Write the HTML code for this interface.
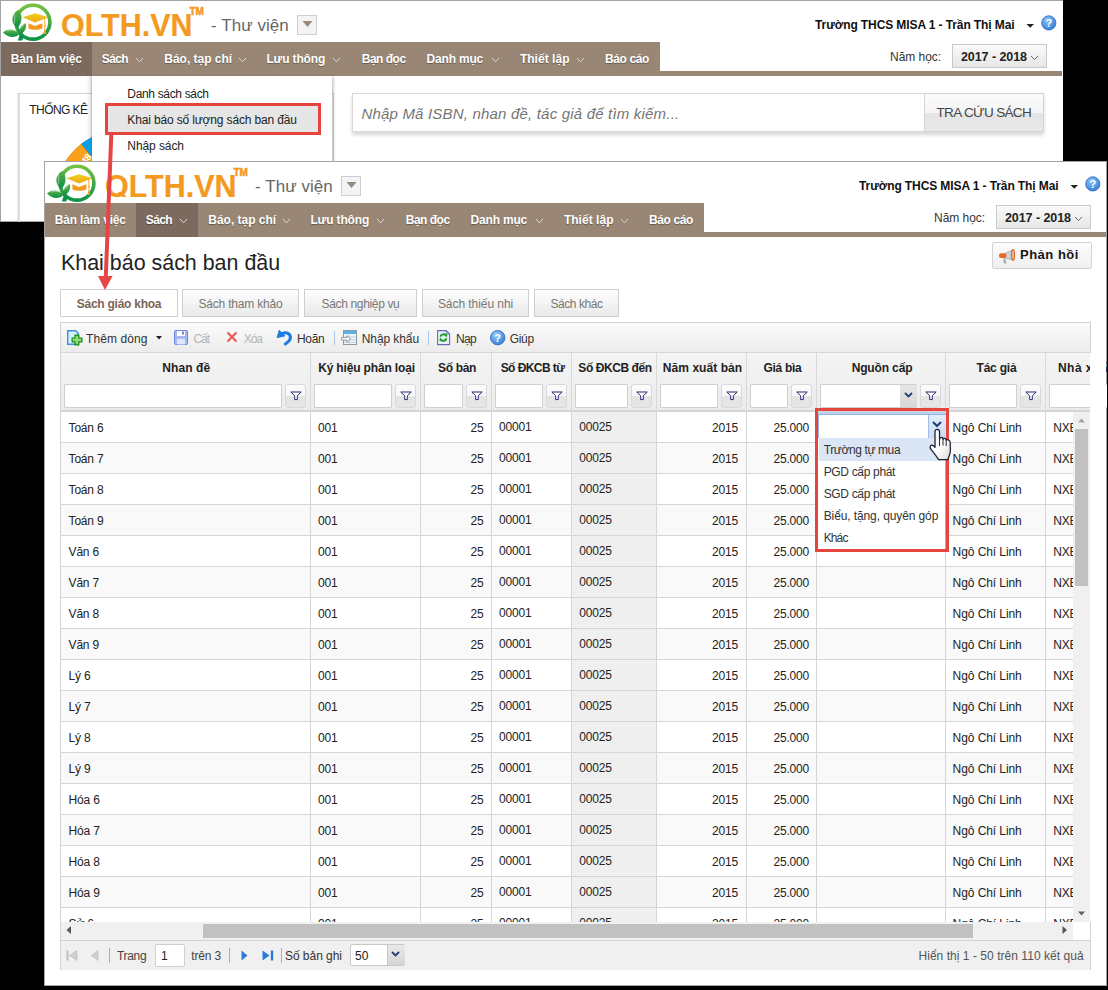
<!DOCTYPE html>
<html><head><meta charset="utf-8"><style>
html,body{margin:0;padding:0}
body{width:1108px;height:990px;background:#000;position:relative;overflow:hidden;font-family:"Liberation Sans", sans-serif}
.win{position:absolute;background:#fff;overflow:hidden}
</style></head><body>
<div class="win" style="left:0;top:0;width:1063px;height:222px"><svg style="position:absolute;left:0px;top:0px;overflow:visible" width="60" height="45" viewBox="0 0 60 45">
<defs>
<linearGradient id="rg" x1="0" y1="0" x2="0" y2="1"><stop offset="0" stop-color="#74c043"/><stop offset="1" stop-color="#0f9347"/></linearGradient>
<linearGradient id="lg" x1="0" y1="0" x2="0" y2="1"><stop offset="0" stop-color="#5cb246"/><stop offset="1" stop-color="#0b8f45"/></linearGradient>
<linearGradient id="cg" x1="0" y1="0" x2="0" y2="1"><stop offset="0" stop-color="#ecd21a"/><stop offset="1" stop-color="#f3a51c"/></linearGradient>
</defs>
<circle cx="33" cy="22.2" r="16.9" fill="none" stroke="url(#rg)" stroke-width="3.6"/>
<path d="M17.5 27.8 C10.5 24 10.5 14 18.6 9.8 C22.8 15 22.5 23 17.5 27.8 Z" fill="url(#lg)"/>
<path d="M20 33.8 C14 28 7 28.5 3 32.5 C8 38 15 38.5 20 33.8 Z" fill="url(#lg)"/>
<path d="M19 34.8 C18.8 28 21.5 24.5 26 23.2 C26.8 28.5 24.5 33 19 34.8 Z" fill="url(#lg)"/>
<path d="M17.8 40.6 L19.8 34.5 L23.8 36 L22.3 40.6 Z" fill="#0b9046"/>
<path d="M14.6 13.5 V23.5 M7 31.2 C10 30 13.5 30 15.8 31.2 M20.5 28.8 L24.3 24.6" stroke="#e9f6e4" stroke-width="0.55" fill="none" opacity="0.85"/>
<path d="M22.5 17.3 L35 13.2 L48.6 17.3 L35 22.5 Z" fill="url(#cg)"/>
<path d="M28.3 23.3 L35 26 L42.5 23.3 L42.3 28.5 C38 30.3 32 30.3 28.5 28.5 Z" fill="#f39a1d"/>
<path d="M44.6 17.5 L44.9 25" stroke="#f3a51c" stroke-width="0.9"/>
<circle cx="45" cy="26" r="1" fill="#f3a51c"/>
<path d="M44.9 26 L46.2 34 L43.6 34 Z" fill="#f39a1d"/>
</svg><div id="t0" style="position:absolute;top:24.5px;line-height:0;white-space:nowrap;font-size:30.5px;font-weight:bold;color:#f39a1f;transform-origin:0 0;transform:scaleX(0.9995);-webkit-text-stroke:0.2px #f39a1f;left:60.5px;">OLTH.VN</div><svg style="position:absolute;left:74px;top:30.5px;overflow:visible" width="9" height="6" viewBox="0 0 9 6"><path d="M0 0 L4 0 L8.5 5 L4.5 5 Z" fill="#f39a1f"/></svg><div id="t1" style="position:absolute;top:11.8px;line-height:0;white-space:nowrap;font-size:10px;font-weight:bold;color:#f39a1f;letter-spacing:-0.108px;-webkit-text-stroke:0.5px #f39a1f;left:189.5px;">TM</div><div id="t2" style="position:absolute;top:26px;line-height:0;white-space:nowrap;font-size:17px;font-weight:normal;color:#666;letter-spacing:0.060px;left:211px;">- Thư viện</div><div style="position:absolute;left:297px;top:15px;width:20px;height:19.5px;box-sizing:border-box;border:1px solid #cfcfcf;background:#f4f4f4"></div><svg style="position:absolute;left:301.5px;top:21px;overflow:visible" width="11" height="6" viewBox="0 0 11 6"><path d="M0.5 0 L10.5 0 L5.5 6 Z" fill="#9c8877"/></svg><div id="t3" style="position:absolute;top:25px;line-height:0;white-space:nowrap;font-size:12px;font-weight:bold;color:#111;letter-spacing:-0.100px;left:815px;">Trường THCS MISA 1 - Trần Thị Mai</div><svg style="position:absolute;left:1026px;top:23.5px;overflow:visible" width="9" height="5" viewBox="0 0 9 5"><path d="M0.5 0 L8 0 L4.25 3.8 Z" fill="#222"/></svg><svg style="position:absolute;left:1040.5px;top:14.5px;overflow:visible" width="16" height="16" viewBox="0 0 16 16"><defs><radialGradient id="hg" cx="0.4" cy="0.3" r="0.8"><stop offset="0" stop-color="#8fc3f5"/><stop offset="1" stop-color="#2c76d6"/></radialGradient></defs><circle cx="7.8" cy="7.9" r="7.1" fill="url(#hg)" stroke="#2d6fc4" stroke-width="0.9"/><text x="7.8" y="12" font-family="Liberation Sans" font-weight="bold" font-size="11" fill="#fff" text-anchor="middle">?</text></svg><div id="t4" style="position:absolute;top:56.8px;line-height:0;white-space:nowrap;font-size:12px;font-weight:normal;color:#333;letter-spacing:-0.031px;left:890px;">Năm học:</div><div style="position:absolute;left:952px;top:44px;width:95px;height:24px;box-sizing:border-box;border:1px solid #c8c8c8;background:linear-gradient(#fafafa,#e6e6e6)"></div><div id="t5" style="position:absolute;top:57px;line-height:0;white-space:nowrap;font-size:12.5px;font-weight:bold;color:#222;letter-spacing:-0.077px;left:961px;">2017 - 2018</div><svg style="position:absolute;left:1029.5px;top:54.5px" width="9" height="5.5"><path d="M1 1 L4.5 4.5 L8 1" fill="none" stroke="#666" stroke-width="1"/></svg><div style="position:absolute;left:1px;top:42px;width:659px;height:34px;background:#998675"></div><div style="position:absolute;left:1px;top:71px;width:1061px;height:5px;background:#998675"></div><div style="position:absolute;left:1px;top:42px;width:91px;height:34px;background:#7b6a5d"></div><div id="t6" style="position:absolute;top:58.8px;line-height:0;white-space:nowrap;font-size:12px;font-weight:bold;color:#fff;letter-spacing:-0.200px;text-shadow:0 1px 1px rgba(0,0,0,.35);left:10.8px;">Bàn làm việc</div><div id="t7" style="position:absolute;top:58.8px;line-height:0;white-space:nowrap;font-size:12px;font-weight:bold;color:#fff;letter-spacing:-0.651px;text-shadow:0 1px 1px rgba(0,0,0,.35);left:101.8px;">Sách</div><svg style="position:absolute;left:135.0px;top:56.5px" width="9" height="5.8"><path d="M1 1 L4.5 4.8 L8 1" fill="none" stroke="#e8e0d8" stroke-width="0.9"/></svg><div id="t8" style="position:absolute;top:58.8px;line-height:0;white-space:nowrap;font-size:12px;font-weight:bold;color:#fff;letter-spacing:-0.016px;text-shadow:0 1px 1px rgba(0,0,0,.35);left:164.3px;">Báo, tạp chí</div><svg style="position:absolute;left:238.0px;top:56.5px" width="9" height="5.8"><path d="M1 1 L4.5 4.8 L8 1" fill="none" stroke="#e8e0d8" stroke-width="0.9"/></svg><div id="t9" style="position:absolute;top:58.8px;line-height:0;white-space:nowrap;font-size:12px;font-weight:bold;color:#fff;letter-spacing:-0.134px;text-shadow:0 1px 1px rgba(0,0,0,.35);left:266.4px;">Lưu thông</div><svg style="position:absolute;left:331.5px;top:56.5px" width="9" height="5.8"><path d="M1 1 L4.5 4.8 L8 1" fill="none" stroke="#e8e0d8" stroke-width="0.9"/></svg><div id="t10" style="position:absolute;top:58.8px;line-height:0;white-space:nowrap;font-size:12px;font-weight:bold;color:#fff;letter-spacing:-0.511px;text-shadow:0 1px 1px rgba(0,0,0,.35);left:361.8px;">Bạn đọc</div><div id="t11" style="position:absolute;top:58.8px;line-height:0;white-space:nowrap;font-size:12px;font-weight:bold;color:#fff;letter-spacing:-0.191px;text-shadow:0 1px 1px rgba(0,0,0,.35);left:426.6px;">Danh mục</div><svg style="position:absolute;left:490.5px;top:56.5px" width="9" height="5.8"><path d="M1 1 L4.5 4.8 L8 1" fill="none" stroke="#e8e0d8" stroke-width="0.9"/></svg><div id="t12" style="position:absolute;top:58.8px;line-height:0;white-space:nowrap;font-size:12px;font-weight:bold;color:#fff;letter-spacing:0.037px;text-shadow:0 1px 1px rgba(0,0,0,.35);left:519.9px;">Thiết lập</div><svg style="position:absolute;left:575.5px;top:56.5px" width="9" height="5.8"><path d="M1 1 L4.5 4.8 L8 1" fill="none" stroke="#e8e0d8" stroke-width="0.9"/></svg><div id="t13" style="position:absolute;top:58.8px;line-height:0;white-space:nowrap;font-size:12px;font-weight:bold;color:#fff;letter-spacing:-0.392px;text-shadow:0 1px 1px rgba(0,0,0,.35);left:605px;">Báo cáo</div><div style="position:absolute;left:0px;top:0px;width:1063px;height:1px;background:#a3a3a3"></div><div style="position:absolute;left:0px;top:0px;width:1px;height:222px;background:#a3a3a3"></div><div style="position:absolute;left:0px;top:221px;width:1063px;height:1px;background:#a3a3a3"></div><div style="position:absolute;left:18px;top:93px;width:316px;height:207px;box-sizing:border-box;border:1px solid #d6d6d6;border-left:2px solid #dcdcdc;box-shadow:-1px 0 1px rgba(0,0,0,.08)"></div><div id="t14" style="position:absolute;top:109.8px;line-height:0;white-space:nowrap;font-size:12px;font-weight:normal;color:#222;letter-spacing:-0.567px;left:29.3px;">THỐNG KÊ</div><div style="position:absolute;left:86px;top:76px;width:6px;height:61px;background:linear-gradient(90deg,rgba(0,0,0,0),rgba(0,0,0,.06) 60%,rgba(0,0,0,.2))"></div><svg style="position:absolute;left:50px;top:125px;overflow:visible" width="150" height="150" viewBox="0 0 150 150"><path d="M75 75 L31.6 18.8 A71 71 0 0 0 4 75 Z" fill="#f9a11b" stroke="#c77c10" stroke-width="0.5"/><path d="M75 75 L31.6 18.8 A71 71 0 0 1 75 4 Z" fill="#08a0e6" stroke="#0a6fa6" stroke-width="0.5"/><text x="31" y="39" transform="rotate(-52 35 35)" font-family="Liberation Sans" font-weight="bold" font-size="10" fill="#fff">48</text></svg><div style="position:absolute;left:352px;top:93px;width:692px;height:39px;box-sizing:border-box;border:1px solid #d9d9d9;background:#fff;box-shadow:0 3px 4px rgba(0,0,0,.16)"></div><div id="t15" style="position:absolute;top:113.6px;line-height:0;white-space:nowrap;font-size:15px;font-weight:normal;color:#757575;letter-spacing:0.192px;font-style:italic;left:361.4px;">Nhập Mã ISBN, nhan đề, tác giả để tìm kiếm...</div><div style="position:absolute;left:924px;top:93px;width:120px;height:39px;box-sizing:border-box;border:1px solid #d3d3d3;background:linear-gradient(#fbfbfb 0,#f4f4f4 50%,#e4e4e4 51%,#e9e9e9 100%)"></div><div id="t16" style="position:absolute;top:113px;line-height:0;white-space:nowrap;font-size:13.5px;font-weight:normal;color:#444;letter-spacing:-0.644px;left:936.5px;">TRA CỨU SÁCH</div><div style="position:absolute;left:92px;top:76px;width:240px;height:224px;background:#fff;box-shadow:1px 1px 3px rgba(0,0,0,.3)"></div><div style="position:absolute;left:106px;top:104px;width:213px;height:29px;background:#e6e6e6"></div><div id="t17" style="position:absolute;top:93.7px;line-height:0;white-space:nowrap;font-size:12px;font-weight:normal;color:#222;letter-spacing:-0.337px;left:127.3px;">Danh sách sách</div><div id="t18" style="position:absolute;top:120px;line-height:0;white-space:nowrap;font-size:12px;font-weight:normal;color:#222;letter-spacing:-0.150px;left:127.3px;">Khai báo số lượng sách ban đầu</div><div id="t19" style="position:absolute;top:145.8px;line-height:0;white-space:nowrap;font-size:12px;font-weight:normal;color:#222;letter-spacing:-0.087px;left:127.3px;">Nhập sách</div><div style="position:absolute;left:105px;top:103px;width:216px;height:32px;box-sizing:border-box;border:3.5px solid #e5443f"></div></div><div class="win" style="left:44px;top:161px;width:1063px;height:825px"><svg style="position:absolute;left:0px;top:0px;overflow:visible" width="60" height="45" viewBox="0 0 60 45">
<defs>
<linearGradient id="rg" x1="0" y1="0" x2="0" y2="1"><stop offset="0" stop-color="#74c043"/><stop offset="1" stop-color="#0f9347"/></linearGradient>
<linearGradient id="lg" x1="0" y1="0" x2="0" y2="1"><stop offset="0" stop-color="#5cb246"/><stop offset="1" stop-color="#0b8f45"/></linearGradient>
<linearGradient id="cg" x1="0" y1="0" x2="0" y2="1"><stop offset="0" stop-color="#ecd21a"/><stop offset="1" stop-color="#f3a51c"/></linearGradient>
</defs>
<circle cx="33" cy="22.2" r="16.9" fill="none" stroke="url(#rg)" stroke-width="3.6"/>
<path d="M17.5 27.8 C10.5 24 10.5 14 18.6 9.8 C22.8 15 22.5 23 17.5 27.8 Z" fill="url(#lg)"/>
<path d="M20 33.8 C14 28 7 28.5 3 32.5 C8 38 15 38.5 20 33.8 Z" fill="url(#lg)"/>
<path d="M19 34.8 C18.8 28 21.5 24.5 26 23.2 C26.8 28.5 24.5 33 19 34.8 Z" fill="url(#lg)"/>
<path d="M17.8 40.6 L19.8 34.5 L23.8 36 L22.3 40.6 Z" fill="#0b9046"/>
<path d="M14.6 13.5 V23.5 M7 31.2 C10 30 13.5 30 15.8 31.2 M20.5 28.8 L24.3 24.6" stroke="#e9f6e4" stroke-width="0.55" fill="none" opacity="0.85"/>
<path d="M22.5 17.3 L35 13.2 L48.6 17.3 L35 22.5 Z" fill="url(#cg)"/>
<path d="M28.3 23.3 L35 26 L42.5 23.3 L42.3 28.5 C38 30.3 32 30.3 28.5 28.5 Z" fill="#f39a1d"/>
<path d="M44.6 17.5 L44.9 25" stroke="#f3a51c" stroke-width="0.9"/>
<circle cx="45" cy="26" r="1" fill="#f3a51c"/>
<path d="M44.9 26 L46.2 34 L43.6 34 Z" fill="#f39a1d"/>
</svg><div id="t20" style="position:absolute;top:24.5px;line-height:0;white-space:nowrap;font-size:30.5px;font-weight:bold;color:#f39a1f;transform-origin:0 0;transform:scaleX(0.9995);-webkit-text-stroke:0.2px #f39a1f;left:60.5px;">OLTH.VN</div><svg style="position:absolute;left:74px;top:30.5px;overflow:visible" width="9" height="6" viewBox="0 0 9 6"><path d="M0 0 L4 0 L8.5 5 L4.5 5 Z" fill="#f39a1f"/></svg><div id="t21" style="position:absolute;top:11.800000000000011px;line-height:0;white-space:nowrap;font-size:10px;font-weight:bold;color:#f39a1f;letter-spacing:-0.108px;-webkit-text-stroke:0.5px #f39a1f;left:189.5px;">TM</div><div id="t22" style="position:absolute;top:26px;line-height:0;white-space:nowrap;font-size:17px;font-weight:normal;color:#666;letter-spacing:0.060px;left:211px;">- Thư viện</div><div style="position:absolute;left:297px;top:15px;width:20px;height:19.5px;box-sizing:border-box;border:1px solid #cfcfcf;background:#f4f4f4"></div><svg style="position:absolute;left:301.5px;top:21px;overflow:visible" width="11" height="6" viewBox="0 0 11 6"><path d="M0.5 0 L10.5 0 L5.5 6 Z" fill="#9c8877"/></svg><div id="t23" style="position:absolute;top:25px;line-height:0;white-space:nowrap;font-size:12px;font-weight:bold;color:#111;letter-spacing:-0.100px;left:815px;">Trường THCS MISA 1 - Trần Thị Mai</div><svg style="position:absolute;left:1026px;top:23.5px;overflow:visible" width="9" height="5" viewBox="0 0 9 5"><path d="M0.5 0 L8 0 L4.25 3.8 Z" fill="#222"/></svg><svg style="position:absolute;left:1040.5px;top:14.5px;overflow:visible" width="16" height="16" viewBox="0 0 16 16"><defs><radialGradient id="hg" cx="0.4" cy="0.3" r="0.8"><stop offset="0" stop-color="#8fc3f5"/><stop offset="1" stop-color="#2c76d6"/></radialGradient></defs><circle cx="7.8" cy="7.9" r="7.1" fill="url(#hg)" stroke="#2d6fc4" stroke-width="0.9"/><text x="7.8" y="12" font-family="Liberation Sans" font-weight="bold" font-size="11" fill="#fff" text-anchor="middle">?</text></svg><div id="t24" style="position:absolute;top:56.80000000000001px;line-height:0;white-space:nowrap;font-size:12px;font-weight:normal;color:#333;letter-spacing:-0.031px;left:890px;">Năm học:</div><div style="position:absolute;left:952px;top:44px;width:95px;height:24px;box-sizing:border-box;border:1px solid #c8c8c8;background:linear-gradient(#fafafa,#e6e6e6)"></div><div id="t25" style="position:absolute;top:57px;line-height:0;white-space:nowrap;font-size:12.5px;font-weight:bold;color:#222;letter-spacing:-0.077px;left:961px;">2017 - 2018</div><svg style="position:absolute;left:1029.5px;top:54.5px" width="9" height="5.5"><path d="M1 1 L4.5 4.5 L8 1" fill="none" stroke="#666" stroke-width="1"/></svg><div style="position:absolute;left:1px;top:42px;width:659px;height:34px;background:#998675"></div><div style="position:absolute;left:1px;top:71px;width:1061px;height:5px;background:#998675"></div><div style="position:absolute;left:92px;top:42px;width:61.5px;height:34px;background:#7b6a5d"></div><div id="t26" style="position:absolute;top:58.80000000000001px;line-height:0;white-space:nowrap;font-size:12px;font-weight:bold;color:#fff;letter-spacing:-0.200px;text-shadow:0 1px 1px rgba(0,0,0,.35);left:10.799999999999997px;">Bàn làm việc</div><div id="t27" style="position:absolute;top:58.80000000000001px;line-height:0;white-space:nowrap;font-size:12px;font-weight:bold;color:#fff;letter-spacing:-0.651px;text-shadow:0 1px 1px rgba(0,0,0,.35);left:101.80000000000001px;">Sách</div><svg style="position:absolute;left:135.0px;top:56.5px" width="9" height="5.8"><path d="M1 1 L4.5 4.8 L8 1" fill="none" stroke="#e8e0d8" stroke-width="0.9"/></svg><div id="t28" style="position:absolute;top:58.80000000000001px;line-height:0;white-space:nowrap;font-size:12px;font-weight:bold;color:#fff;letter-spacing:-0.016px;text-shadow:0 1px 1px rgba(0,0,0,.35);left:164.3px;">Báo, tạp chí</div><svg style="position:absolute;left:238.0px;top:56.5px" width="9" height="5.8"><path d="M1 1 L4.5 4.8 L8 1" fill="none" stroke="#e8e0d8" stroke-width="0.9"/></svg><div id="t29" style="position:absolute;top:58.80000000000001px;line-height:0;white-space:nowrap;font-size:12px;font-weight:bold;color:#fff;letter-spacing:-0.134px;text-shadow:0 1px 1px rgba(0,0,0,.35);left:266.4px;">Lưu thông</div><svg style="position:absolute;left:331.5px;top:56.5px" width="9" height="5.8"><path d="M1 1 L4.5 4.8 L8 1" fill="none" stroke="#e8e0d8" stroke-width="0.9"/></svg><div id="t30" style="position:absolute;top:58.80000000000001px;line-height:0;white-space:nowrap;font-size:12px;font-weight:bold;color:#fff;letter-spacing:-0.511px;text-shadow:0 1px 1px rgba(0,0,0,.35);left:361.8px;">Bạn đọc</div><div id="t31" style="position:absolute;top:58.80000000000001px;line-height:0;white-space:nowrap;font-size:12px;font-weight:bold;color:#fff;letter-spacing:-0.191px;text-shadow:0 1px 1px rgba(0,0,0,.35);left:426.6px;">Danh mục</div><svg style="position:absolute;left:490.5px;top:56.5px" width="9" height="5.8"><path d="M1 1 L4.5 4.8 L8 1" fill="none" stroke="#e8e0d8" stroke-width="0.9"/></svg><div id="t32" style="position:absolute;top:58.80000000000001px;line-height:0;white-space:nowrap;font-size:12px;font-weight:bold;color:#fff;letter-spacing:0.037px;text-shadow:0 1px 1px rgba(0,0,0,.35);left:519.9px;">Thiết lập</div><svg style="position:absolute;left:575.5px;top:56.5px" width="9" height="5.8"><path d="M1 1 L4.5 4.8 L8 1" fill="none" stroke="#e8e0d8" stroke-width="0.9"/></svg><div id="t33" style="position:absolute;top:58.80000000000001px;line-height:0;white-space:nowrap;font-size:12px;font-weight:bold;color:#fff;letter-spacing:-0.392px;text-shadow:0 1px 1px rgba(0,0,0,.35);left:605px;">Báo cáo</div><div style="position:absolute;left:0px;top:0px;width:1063px;height:1px;background:#a3a3a3"></div><div style="position:absolute;left:0px;top:0px;width:1px;height:825px;background:#a3a3a3"></div><div style="position:absolute;left:1062px;top:0px;width:1px;height:825px;background:#a3a3a3"></div><div style="position:absolute;left:0px;top:824px;width:1063px;height:1px;background:#a3a3a3"></div><div id="t34" style="position:absolute;top:102px;line-height:0;white-space:nowrap;font-size:22.5px;font-weight:normal;color:#222;transform-origin:0 0;transform:scaleX(0.9520);left:17px;">Khai báo sách ban đầu</div><div style="position:absolute;left:948px;top:81px;width:100px;height:27px;box-sizing:border-box;border:1px solid #d4d4d4;border-radius:2px;background:linear-gradient(#fdfdfd,#efefef)"></div><svg style="position:absolute;left:954px;top:88px;overflow:visible" width="18" height="16" viewBox="0 0 18 16"><path d="M5 9.5 L7.5 9.5 L8.5 14.5 L5.8 14.5 Z" fill="#a9b3b3"/><path d="M7 4.5 L15 1 L15 11 L7 8.8 Z" fill="#cfd6d6" stroke="#8a9494" stroke-width="0.6"/><rect x="1" y="4.3" width="7.5" height="4.8" rx="2" fill="#e8692a"/><ellipse cx="15" cy="6" rx="1.4" ry="5.2" fill="#dfe5e5" stroke="#e8692a" stroke-width="1.5"/></svg><div id="t35" style="position:absolute;top:94px;line-height:0;white-space:nowrap;font-size:13px;font-weight:bold;color:#151515;letter-spacing:0.503px;left:976px;">Phản hồi</div><div style="position:absolute;left:16px;top:128px;width:118px;height:28px;box-sizing:border-box;border:1px solid #cfcfcf;background:#fff"></div><div id="t36" style="position:absolute;top:143px;line-height:0;white-space:nowrap;font-size:12px;font-weight:bold;color:#7b6454;letter-spacing:-0.258px;left:75.0px;transform:translateX(-50%);">Sách giáo khoa</div><div style="position:absolute;left:138px;top:128px;width:117px;height:28px;box-sizing:border-box;border:1px solid #cfcfcf;background:linear-gradient(#fefefe,#e9e9e9)"></div><div id="t37" style="position:absolute;top:143px;line-height:0;white-space:nowrap;font-size:12px;font-weight:normal;color:#777;letter-spacing:-0.196px;left:196.5px;transform:translateX(-50%);">Sách tham khảo</div><div style="position:absolute;left:260px;top:128px;width:113px;height:28px;box-sizing:border-box;border:1px solid #cfcfcf;background:linear-gradient(#fefefe,#e9e9e9)"></div><div id="t38" style="position:absolute;top:143px;line-height:0;white-space:nowrap;font-size:12px;font-weight:normal;color:#777;letter-spacing:-0.350px;left:316.5px;transform:translateX(-50%);">Sách nghiệp vụ</div><div style="position:absolute;left:378px;top:128px;width:107px;height:28px;box-sizing:border-box;border:1px solid #cfcfcf;background:linear-gradient(#fefefe,#e9e9e9)"></div><div id="t39" style="position:absolute;top:143px;line-height:0;white-space:nowrap;font-size:12px;font-weight:normal;color:#777;letter-spacing:-0.061px;left:431.5px;transform:translateX(-50%);">Sách thiếu nhi</div><div style="position:absolute;left:490px;top:128px;width:85px;height:28px;box-sizing:border-box;border:1px solid #cfcfcf;background:linear-gradient(#fefefe,#e9e9e9)"></div><div id="t40" style="position:absolute;top:143px;line-height:0;white-space:nowrap;font-size:12px;font-weight:normal;color:#777;letter-spacing:-0.467px;left:532.5px;transform:translateX(-50%);">Sách khác</div><div style="position:absolute;left:16px;top:161px;width:1031px;height:648px;box-sizing:border-box;border:1px solid #d3d3d3;border-bottom:none;background:#fff"></div><div style="position:absolute;left:17px;top:162px;width:1029px;height:29px;background:linear-gradient(#fbfbfb,#ececec)"></div><div style="position:absolute;left:17px;top:191px;width:1029px;height:1px;background:#d7d7d7"></div><svg style="position:absolute;left:22px;top:168px;overflow:visible" width="17" height="17" viewBox="0 0 17 17"><path d="M1.7 1.7 L9.6 1.7 L12.3 4.4 L12.3 15.2 L1.7 15.2 Z" fill="#d6efff" stroke="#3a93e2" stroke-width="1.4"/><path d="M3.5 3.5 H8 M3.5 13.5 H8" stroke="#f4fcff" stroke-width="1.2"/><path d="M9 6.1 H12.8 V9 H15.9 V12.8 H12.8 V15.8 H9 V12.8 H6.1 V9 H9 Z" fill="#8fdc7a" stroke="#128a12" stroke-width="1.2"/></svg><div id="t41" style="position:absolute;top:178px;line-height:0;white-space:nowrap;font-size:12px;font-weight:normal;color:#333;letter-spacing:0.084px;left:42px;">Thêm dòng</div><svg style="position:absolute;left:112px;top:175px;overflow:visible" width="6" height="4" viewBox="0 0 6 4"><path d="M0 0 L6 0 L3 3.5 Z" fill="#222"/></svg><svg style="position:absolute;left:130px;top:169px;overflow:visible" width="14" height="15" viewBox="0 0 14 15"><rect x="0.5" y="0.5" width="13" height="14" rx="1" fill="#a6b8f0" stroke="#6f86e0"/><rect x="3" y="1" width="8" height="5" fill="#fff"/><rect x="8" y="1.5" width="2" height="3" fill="#6f86e0"/><rect x="3" y="9" width="8" height="5.5" fill="#dfe6fb"/></svg><div id="t42" style="position:absolute;top:178px;line-height:0;white-space:nowrap;font-size:12px;font-weight:normal;color:#b5b5b5;letter-spacing:-0.970px;left:149.4px;">Cất</div><svg style="position:absolute;left:182px;top:170px;overflow:visible" width="12" height="12" viewBox="0 0 12 12"><path d="M1.5 1.5 L10.5 10.5 M10.5 1.5 L1.5 10.5" stroke="#e85b5b" stroke-width="2.2"/></svg><div id="t43" style="position:absolute;top:178px;line-height:0;white-space:nowrap;font-size:12px;font-weight:normal;color:#b5b5b5;letter-spacing:-1.089px;left:199.8px;">Xóa</div><svg style="position:absolute;left:232px;top:168px;overflow:visible" width="17" height="17" viewBox="0 0 17 17"><path d="M6.5 4.6 C10.5 2.6 14.4 4.8 14.4 8.6 C14.4 11 12.5 13 9.3 15" fill="none" stroke="#1d7ce0" stroke-width="3.1" stroke-linecap="round"/><path d="M3.2 1.1 L1 8.7 L8.9 7 Z" fill="#1d7ce0" stroke="#1d7ce0" stroke-width="0.8" stroke-linejoin="round"/></svg><div id="t44" style="position:absolute;top:178px;line-height:0;white-space:nowrap;font-size:12px;font-weight:normal;color:#333;letter-spacing:-0.338px;left:253px;">Hoãn</div><div style="position:absolute;left:290px;top:170px;width:1px;height:14px;background:#a9c8ea"></div><svg style="position:absolute;left:297px;top:169px;overflow:visible" width="17" height="16" viewBox="0 0 17 16"><rect x="2.5" y="0.5" width="13" height="14" fill="#eef6f9" stroke="#8d9ba1"/><rect x="3" y="1" width="12" height="3" fill="#5bb1ea"/><path d="M3 7 H15 M3 9.8 H15 M3 12.3 H15 M8 4 V14" stroke="#b9ccd4" stroke-width="0.9"/><path d="M0.5 7.6 H5.8 V5.8 L9.6 8.8 L5.8 11.8 V10 H0.5 Z" fill="#fff" stroke="#7a888e" stroke-width="0.8" stroke-linejoin="round"/></svg><div id="t45" style="position:absolute;top:178px;line-height:0;white-space:nowrap;font-size:12px;font-weight:normal;color:#333;letter-spacing:-0.096px;left:317.8px;">Nhập khẩu</div><div style="position:absolute;left:384px;top:170px;width:1px;height:14px;background:#a9c8ea"></div><svg style="position:absolute;left:393px;top:169px;overflow:visible" width="14" height="16" viewBox="0 0 14 16"><path d="M0.6 0.6 H9.2 L12.6 4 V14.6 H0.6 Z" fill="#e9eefc" stroke="#676db4" stroke-width="1.1"/><path d="M9.2 0.6 V4 H12.6" fill="none" stroke="#676db4" stroke-width="0.8"/><path d="M3.6 6.8 C3.8 4 8 3.6 8.8 5.6" fill="none" stroke="#15a015" stroke-width="1.9"/><path d="M7 4.2 L10.6 4.4 L9.4 7.6 Z" fill="#15a015"/><path d="M9.2 8.4 C9 11.2 4.8 11.6 4 9.6" fill="none" stroke="#15a015" stroke-width="1.9"/><path d="M5.8 11 L2.2 10.8 L3.4 7.6 Z" fill="#15a015"/></svg><div id="t46" style="position:absolute;top:178px;line-height:0;white-space:nowrap;font-size:12px;font-weight:normal;color:#333;letter-spacing:-0.670px;left:412px;">Nạp</div><svg style="position:absolute;left:445.5px;top:169px;overflow:visible" width="16" height="16" viewBox="0 0 16 16"><defs><radialGradient id="hg2" cx="0.4" cy="0.3" r="0.8"><stop offset="0" stop-color="#9dcbf6"/><stop offset="1" stop-color="#2c76d6"/></radialGradient></defs><circle cx="7.7" cy="7.7" r="7.2" fill="url(#hg2)" stroke="#2d6fc4" stroke-width="0.9"/><text x="7.7" y="12" font-family="Liberation Sans" font-weight="bold" font-size="11" fill="#fff" text-anchor="middle">?</text></svg><div id="t47" style="position:absolute;top:178px;line-height:0;white-space:nowrap;font-size:12px;font-weight:normal;color:#333;letter-spacing:-0.291px;left:465.7px;">Giúp</div><div style="position:absolute;left:17px;top:192px;width:1029px;height:57px;background:linear-gradient(#f4f4f4,#ececec)"></div><div style="position:absolute;left:17px;top:249px;width:1029px;height:2px;background:#d4d4d4"></div><div id="t48" style="position:absolute;top:207px;line-height:0;white-space:nowrap;font-size:12px;font-weight:bold;color:#222;letter-spacing:0.089px;left:142.25px;transform:translateX(-50%);">Nhan đề</div><div style="position:absolute;left:20px;top:223px;width:218px;height:24px;box-sizing:border-box;border:1px solid #cfcfcf;background:#fff;border-radius:1px"></div><div style="position:absolute;left:241px;top:223px;width:21px;height:24px;box-sizing:border-box;border:1px solid #d9d9d9;border-radius:3px;background:linear-gradient(#fcfcfc 0,#f8f8f8 48%,#e4e4e4 49%,#e6e6e6)"></div><svg style="position:absolute;left:246px;top:230px;overflow:visible" width="12" height="10" viewBox="0 0 12 10"><path d="M0.8 1 L11.2 1 L7.3 4.8 L7.3 8.6 L4.7 8.6 L4.7 4.8 Z" fill="#fff" stroke="#1c1c6a" stroke-width="0.95" stroke-linejoin="miter"/></svg><div style="position:absolute;left:266px;top:192px;width:1px;height:569px;background:#d9d9d9"></div><div id="t49" style="position:absolute;top:207px;line-height:0;white-space:nowrap;font-size:12px;font-weight:bold;color:#222;letter-spacing:-0.157px;left:322.5px;transform:translateX(-50%);">Ký hiệu phân loại</div><div style="position:absolute;left:270px;top:223px;width:78px;height:24px;box-sizing:border-box;border:1px solid #cfcfcf;background:#fff;border-radius:1px"></div><div style="position:absolute;left:351px;top:223px;width:21px;height:24px;box-sizing:border-box;border:1px solid #d9d9d9;border-radius:3px;background:linear-gradient(#fcfcfc 0,#f8f8f8 48%,#e4e4e4 49%,#e6e6e6)"></div><svg style="position:absolute;left:356px;top:230px;overflow:visible" width="12" height="10" viewBox="0 0 12 10"><path d="M0.8 1 L11.2 1 L7.3 4.8 L7.3 8.6 L4.7 8.6 L4.7 4.8 Z" fill="#fff" stroke="#1c1c6a" stroke-width="0.95" stroke-linejoin="miter"/></svg><div style="position:absolute;left:376px;top:192px;width:1px;height:569px;background:#d9d9d9"></div><div id="t50" style="position:absolute;top:207px;line-height:0;white-space:nowrap;font-size:12px;font-weight:bold;color:#222;letter-spacing:-0.334px;left:413.0px;transform:translateX(-50%);">Số bản</div><div style="position:absolute;left:380px;top:223px;width:39px;height:24px;box-sizing:border-box;border:1px solid #cfcfcf;background:#fff;border-radius:1px"></div><div style="position:absolute;left:422px;top:223px;width:21px;height:24px;box-sizing:border-box;border:1px solid #d9d9d9;border-radius:3px;background:linear-gradient(#fcfcfc 0,#f8f8f8 48%,#e4e4e4 49%,#e6e6e6)"></div><svg style="position:absolute;left:427px;top:230px;overflow:visible" width="12" height="10" viewBox="0 0 12 10"><path d="M0.8 1 L11.2 1 L7.3 4.8 L7.3 8.6 L4.7 8.6 L4.7 4.8 Z" fill="#fff" stroke="#1c1c6a" stroke-width="0.95" stroke-linejoin="miter"/></svg><div style="position:absolute;left:447px;top:192px;width:1px;height:569px;background:#d9d9d9"></div><div id="t51" style="position:absolute;top:207px;line-height:0;white-space:nowrap;font-size:12px;font-weight:bold;color:#222;letter-spacing:-0.574px;left:488.5px;transform:translateX(-50%);">Số ĐKCB từ</div><div style="position:absolute;left:451px;top:223px;width:48px;height:24px;box-sizing:border-box;border:1px solid #cfcfcf;background:#fff;border-radius:1px"></div><div style="position:absolute;left:502px;top:223px;width:21px;height:24px;box-sizing:border-box;border:1px solid #d9d9d9;border-radius:3px;background:linear-gradient(#fcfcfc 0,#f8f8f8 48%,#e4e4e4 49%,#e6e6e6)"></div><svg style="position:absolute;left:507px;top:230px;overflow:visible" width="12" height="10" viewBox="0 0 12 10"><path d="M0.8 1 L11.2 1 L7.3 4.8 L7.3 8.6 L4.7 8.6 L4.7 4.8 Z" fill="#fff" stroke="#1c1c6a" stroke-width="0.95" stroke-linejoin="miter"/></svg><div style="position:absolute;left:527px;top:192px;width:1px;height:569px;background:#d9d9d9"></div><div id="t52" style="position:absolute;top:207px;line-height:0;white-space:nowrap;font-size:12px;font-weight:bold;color:#222;letter-spacing:-0.417px;left:571.0px;transform:translateX(-50%);">Số ĐKCB đến</div><div style="position:absolute;left:531px;top:223px;width:53px;height:24px;box-sizing:border-box;border:1px solid #cfcfcf;background:#fff;border-radius:1px"></div><div style="position:absolute;left:587px;top:223px;width:21px;height:24px;box-sizing:border-box;border:1px solid #d9d9d9;border-radius:3px;background:linear-gradient(#fcfcfc 0,#f8f8f8 48%,#e4e4e4 49%,#e6e6e6)"></div><svg style="position:absolute;left:592px;top:230px;overflow:visible" width="12" height="10" viewBox="0 0 12 10"><path d="M0.8 1 L11.2 1 L7.3 4.8 L7.3 8.6 L4.7 8.6 L4.7 4.8 Z" fill="#fff" stroke="#1c1c6a" stroke-width="0.95" stroke-linejoin="miter"/></svg><div style="position:absolute;left:612px;top:192px;width:1px;height:569px;background:#d9d9d9"></div><div id="t53" style="position:absolute;top:207px;line-height:0;white-space:nowrap;font-size:12px;font-weight:bold;color:#222;letter-spacing:0.059px;left:658.5px;transform:translateX(-50%);">Năm xuất bản</div><div style="position:absolute;left:616px;top:223px;width:58px;height:24px;box-sizing:border-box;border:1px solid #cfcfcf;background:#fff;border-radius:1px"></div><div style="position:absolute;left:677px;top:223px;width:21px;height:24px;box-sizing:border-box;border:1px solid #d9d9d9;border-radius:3px;background:linear-gradient(#fcfcfc 0,#f8f8f8 48%,#e4e4e4 49%,#e6e6e6)"></div><svg style="position:absolute;left:682px;top:230px;overflow:visible" width="12" height="10" viewBox="0 0 12 10"><path d="M0.8 1 L11.2 1 L7.3 4.8 L7.3 8.6 L4.7 8.6 L4.7 4.8 Z" fill="#fff" stroke="#1c1c6a" stroke-width="0.95" stroke-linejoin="miter"/></svg><div style="position:absolute;left:702px;top:192px;width:1px;height:569px;background:#d9d9d9"></div><div id="t54" style="position:absolute;top:207px;line-height:0;white-space:nowrap;font-size:12px;font-weight:bold;color:#222;letter-spacing:-0.307px;left:738.5px;transform:translateX(-50%);">Giá bìa</div><div style="position:absolute;left:706px;top:223px;width:38px;height:24px;box-sizing:border-box;border:1px solid #cfcfcf;background:#fff;border-radius:1px"></div><div style="position:absolute;left:747px;top:223px;width:21px;height:24px;box-sizing:border-box;border:1px solid #d9d9d9;border-radius:3px;background:linear-gradient(#fcfcfc 0,#f8f8f8 48%,#e4e4e4 49%,#e6e6e6)"></div><svg style="position:absolute;left:752px;top:230px;overflow:visible" width="12" height="10" viewBox="0 0 12 10"><path d="M0.8 1 L11.2 1 L7.3 4.8 L7.3 8.6 L4.7 8.6 L4.7 4.8 Z" fill="#fff" stroke="#1c1c6a" stroke-width="0.95" stroke-linejoin="miter"/></svg><div style="position:absolute;left:772px;top:192px;width:1px;height:569px;background:#d9d9d9"></div><div id="t55" style="position:absolute;top:207px;line-height:0;white-space:nowrap;font-size:12px;font-weight:bold;color:#222;letter-spacing:-0.146px;left:838.0px;transform:translateX(-50%);">Nguồn cấp</div><div style="position:absolute;left:776px;top:223px;width:97px;height:24px;box-sizing:border-box;border:1px solid #cfcfcf;background:#fff;border-radius:1px"></div><div style="position:absolute;left:856px;top:224px;width:17px;height:22px;background:linear-gradient(#e6e6e6,#d8d8d8)"></div><svg style="position:absolute;left:860px;top:231px;overflow:visible" width="9" height="6" viewBox="0 0 9 6"><path d="M1 1 L4.5 4.5 L8 1" fill="none" stroke="#1f3f7a" stroke-width="1.8"/></svg><div style="position:absolute;left:876px;top:223px;width:21px;height:24px;box-sizing:border-box;border:1px solid #d9d9d9;border-radius:3px;background:linear-gradient(#fcfcfc 0,#f8f8f8 48%,#e4e4e4 49%,#e6e6e6)"></div><svg style="position:absolute;left:881px;top:230px;overflow:visible" width="12" height="10" viewBox="0 0 12 10"><path d="M0.8 1 L11.2 1 L7.3 4.8 L7.3 8.6 L4.7 8.6 L4.7 4.8 Z" fill="#fff" stroke="#1c1c6a" stroke-width="0.95" stroke-linejoin="miter"/></svg><div style="position:absolute;left:901px;top:192px;width:1px;height:569px;background:#d9d9d9"></div><div id="t56" style="position:absolute;top:207px;line-height:0;white-space:nowrap;font-size:12px;font-weight:bold;color:#222;letter-spacing:-0.196px;left:952.5px;transform:translateX(-50%);">Tác giả</div><div style="position:absolute;left:905px;top:223px;width:68px;height:24px;box-sizing:border-box;border:1px solid #cfcfcf;background:#fff;border-radius:1px"></div><div style="position:absolute;left:976px;top:223px;width:21px;height:24px;box-sizing:border-box;border:1px solid #d9d9d9;border-radius:3px;background:linear-gradient(#fcfcfc 0,#f8f8f8 48%,#e4e4e4 49%,#e6e6e6)"></div><svg style="position:absolute;left:981px;top:230px;overflow:visible" width="12" height="10" viewBox="0 0 12 10"><path d="M0.8 1 L11.2 1 L7.3 4.8 L7.3 8.6 L4.7 8.6 L4.7 4.8 Z" fill="#fff" stroke="#1c1c6a" stroke-width="0.95" stroke-linejoin="miter"/></svg><div style="position:absolute;left:1001px;top:192px;width:1px;height:569px;background:#d9d9d9"></div><div id="t57" style="position:absolute;top:207px;line-height:0;white-space:nowrap;font-size:12px;font-weight:bold;color:#222;letter-spacing:0.453px;left:1014px;">Nhà xuất bản</div><div style="position:absolute;left:1005px;top:223px;width:70px;height:24px;box-sizing:border-box;border:1px solid #cfcfcf;background:#fff;border-radius:1px"></div><div style="position:absolute;left:1078px;top:223px;width:21px;height:24px;box-sizing:border-box;border:1px solid #d9d9d9;border-radius:3px;background:linear-gradient(#fcfcfc 0,#f8f8f8 48%,#e4e4e4 49%,#e6e6e6)"></div><svg style="position:absolute;left:1083px;top:230px;overflow:visible" width="12" height="10" viewBox="0 0 12 10"><path d="M0.8 1 L11.2 1 L7.3 4.8 L7.3 8.6 L4.7 8.6 L4.7 4.8 Z" fill="#fff" stroke="#1c1c6a" stroke-width="0.95" stroke-linejoin="miter"/></svg><div style="position:absolute;left:1046px;top:192px;width:16px;height:569px;background:#fff"></div><div style="position:absolute;left:17px;top:251px;width:1012px;height:30px;background:#fff"></div><div style="position:absolute;left:528px;top:251px;width:84px;height:30px;background:#efefef"></div><div style="position:absolute;left:17px;top:281px;width:1012px;height:1px;background:#d6d6d6"></div><div id="t58" style="position:absolute;top:267px;line-height:0;white-space:nowrap;font-size:12px;font-weight:normal;color:#222;letter-spacing:0.000px;letter-spacing:-0.2px;left:24.599999999999994px;">Toán 6</div><div id="t59" style="position:absolute;top:267px;line-height:0;white-space:nowrap;font-size:12px;font-weight:normal;color:#222;letter-spacing:0.000px;letter-spacing:-0.2px;left:274px;">001</div><div id="t60" style="position:absolute;top:267px;line-height:0;white-space:nowrap;font-size:12px;font-weight:normal;color:#222;letter-spacing:0.000px;letter-spacing:-0.2px;right:623.5px;">25</div><div id="t61" style="position:absolute;top:266px;line-height:0;white-space:nowrap;font-size:12px;font-weight:normal;color:#222;letter-spacing:0.000px;letter-spacing:-0.2px;left:455px;">00001</div><div id="t62" style="position:absolute;top:266px;line-height:0;white-space:nowrap;font-size:12px;font-weight:normal;color:#222;letter-spacing:0.000px;letter-spacing:-0.2px;left:535.3px;">00025</div><div id="t63" style="position:absolute;top:267px;line-height:0;white-space:nowrap;font-size:12px;font-weight:normal;color:#222;letter-spacing:0.000px;letter-spacing:-0.2px;right:369px;">2015</div><div id="t64" style="position:absolute;top:267px;line-height:0;white-space:nowrap;font-size:12px;font-weight:normal;color:#222;letter-spacing:0.000px;letter-spacing:-0.2px;right:298px;">25.000</div><div id="t65" style="position:absolute;top:267px;line-height:0;white-space:nowrap;font-size:12px;font-weight:normal;color:#222;letter-spacing:-0.079px;left:908.6px;">Ngô Chí Linh</div><div id="t66" style="position:absolute;top:267px;line-height:0;white-space:nowrap;font-size:12px;font-weight:normal;color:#222;letter-spacing:0.000px;letter-spacing:-0.2px;left:1009.3px;">NXB</div><div style="position:absolute;left:17px;top:282px;width:1012px;height:30px;background:#f9f9f9"></div><div style="position:absolute;left:528px;top:282px;width:84px;height:30px;background:#efefef"></div><div style="position:absolute;left:17px;top:312px;width:1012px;height:1px;background:#d6d6d6"></div><div id="t67" style="position:absolute;top:298px;line-height:0;white-space:nowrap;font-size:12px;font-weight:normal;color:#222;letter-spacing:0.000px;letter-spacing:-0.2px;left:24.599999999999994px;">Toán 7</div><div id="t68" style="position:absolute;top:298px;line-height:0;white-space:nowrap;font-size:12px;font-weight:normal;color:#222;letter-spacing:0.000px;letter-spacing:-0.2px;left:274px;">001</div><div id="t69" style="position:absolute;top:298px;line-height:0;white-space:nowrap;font-size:12px;font-weight:normal;color:#222;letter-spacing:0.000px;letter-spacing:-0.2px;right:623.5px;">25</div><div id="t70" style="position:absolute;top:297px;line-height:0;white-space:nowrap;font-size:12px;font-weight:normal;color:#222;letter-spacing:0.000px;letter-spacing:-0.2px;left:455px;">00001</div><div id="t71" style="position:absolute;top:297px;line-height:0;white-space:nowrap;font-size:12px;font-weight:normal;color:#222;letter-spacing:0.000px;letter-spacing:-0.2px;left:535.3px;">00025</div><div id="t72" style="position:absolute;top:298px;line-height:0;white-space:nowrap;font-size:12px;font-weight:normal;color:#222;letter-spacing:0.000px;letter-spacing:-0.2px;right:369px;">2015</div><div id="t73" style="position:absolute;top:298px;line-height:0;white-space:nowrap;font-size:12px;font-weight:normal;color:#222;letter-spacing:0.000px;letter-spacing:-0.2px;right:298px;">25.000</div><div id="t74" style="position:absolute;top:298px;line-height:0;white-space:nowrap;font-size:12px;font-weight:normal;color:#222;letter-spacing:-0.079px;left:908.6px;">Ngô Chí Linh</div><div id="t75" style="position:absolute;top:298px;line-height:0;white-space:nowrap;font-size:12px;font-weight:normal;color:#222;letter-spacing:0.000px;letter-spacing:-0.2px;left:1009.3px;">NXB</div><div style="position:absolute;left:17px;top:313px;width:1012px;height:30px;background:#fff"></div><div style="position:absolute;left:528px;top:313px;width:84px;height:30px;background:#efefef"></div><div style="position:absolute;left:17px;top:343px;width:1012px;height:1px;background:#d6d6d6"></div><div id="t76" style="position:absolute;top:329px;line-height:0;white-space:nowrap;font-size:12px;font-weight:normal;color:#222;letter-spacing:0.000px;letter-spacing:-0.2px;left:24.599999999999994px;">Toán 8</div><div id="t77" style="position:absolute;top:329px;line-height:0;white-space:nowrap;font-size:12px;font-weight:normal;color:#222;letter-spacing:0.000px;letter-spacing:-0.2px;left:274px;">001</div><div id="t78" style="position:absolute;top:329px;line-height:0;white-space:nowrap;font-size:12px;font-weight:normal;color:#222;letter-spacing:0.000px;letter-spacing:-0.2px;right:623.5px;">25</div><div id="t79" style="position:absolute;top:328px;line-height:0;white-space:nowrap;font-size:12px;font-weight:normal;color:#222;letter-spacing:0.000px;letter-spacing:-0.2px;left:455px;">00001</div><div id="t80" style="position:absolute;top:328px;line-height:0;white-space:nowrap;font-size:12px;font-weight:normal;color:#222;letter-spacing:0.000px;letter-spacing:-0.2px;left:535.3px;">00025</div><div id="t81" style="position:absolute;top:329px;line-height:0;white-space:nowrap;font-size:12px;font-weight:normal;color:#222;letter-spacing:0.000px;letter-spacing:-0.2px;right:369px;">2015</div><div id="t82" style="position:absolute;top:329px;line-height:0;white-space:nowrap;font-size:12px;font-weight:normal;color:#222;letter-spacing:0.000px;letter-spacing:-0.2px;right:298px;">25.000</div><div id="t83" style="position:absolute;top:329px;line-height:0;white-space:nowrap;font-size:12px;font-weight:normal;color:#222;letter-spacing:-0.079px;left:908.6px;">Ngô Chí Linh</div><div id="t84" style="position:absolute;top:329px;line-height:0;white-space:nowrap;font-size:12px;font-weight:normal;color:#222;letter-spacing:0.000px;letter-spacing:-0.2px;left:1009.3px;">NXB</div><div style="position:absolute;left:17px;top:344px;width:1012px;height:30px;background:#f9f9f9"></div><div style="position:absolute;left:528px;top:344px;width:84px;height:30px;background:#efefef"></div><div style="position:absolute;left:17px;top:374px;width:1012px;height:1px;background:#d6d6d6"></div><div id="t85" style="position:absolute;top:360px;line-height:0;white-space:nowrap;font-size:12px;font-weight:normal;color:#222;letter-spacing:0.000px;letter-spacing:-0.2px;left:24.599999999999994px;">Toán 9</div><div id="t86" style="position:absolute;top:360px;line-height:0;white-space:nowrap;font-size:12px;font-weight:normal;color:#222;letter-spacing:0.000px;letter-spacing:-0.2px;left:274px;">001</div><div id="t87" style="position:absolute;top:360px;line-height:0;white-space:nowrap;font-size:12px;font-weight:normal;color:#222;letter-spacing:0.000px;letter-spacing:-0.2px;right:623.5px;">25</div><div id="t88" style="position:absolute;top:359px;line-height:0;white-space:nowrap;font-size:12px;font-weight:normal;color:#222;letter-spacing:0.000px;letter-spacing:-0.2px;left:455px;">00001</div><div id="t89" style="position:absolute;top:359px;line-height:0;white-space:nowrap;font-size:12px;font-weight:normal;color:#222;letter-spacing:0.000px;letter-spacing:-0.2px;left:535.3px;">00025</div><div id="t90" style="position:absolute;top:360px;line-height:0;white-space:nowrap;font-size:12px;font-weight:normal;color:#222;letter-spacing:0.000px;letter-spacing:-0.2px;right:369px;">2015</div><div id="t91" style="position:absolute;top:360px;line-height:0;white-space:nowrap;font-size:12px;font-weight:normal;color:#222;letter-spacing:0.000px;letter-spacing:-0.2px;right:298px;">25.000</div><div id="t92" style="position:absolute;top:360px;line-height:0;white-space:nowrap;font-size:12px;font-weight:normal;color:#222;letter-spacing:-0.079px;left:908.6px;">Ngô Chí Linh</div><div id="t93" style="position:absolute;top:360px;line-height:0;white-space:nowrap;font-size:12px;font-weight:normal;color:#222;letter-spacing:0.000px;letter-spacing:-0.2px;left:1009.3px;">NXB</div><div style="position:absolute;left:17px;top:375px;width:1012px;height:30px;background:#fff"></div><div style="position:absolute;left:528px;top:375px;width:84px;height:30px;background:#efefef"></div><div style="position:absolute;left:17px;top:405px;width:1012px;height:1px;background:#d6d6d6"></div><div id="t94" style="position:absolute;top:391px;line-height:0;white-space:nowrap;font-size:12px;font-weight:normal;color:#222;letter-spacing:0.000px;letter-spacing:-0.2px;left:24.599999999999994px;">Văn 6</div><div id="t95" style="position:absolute;top:391px;line-height:0;white-space:nowrap;font-size:12px;font-weight:normal;color:#222;letter-spacing:0.000px;letter-spacing:-0.2px;left:274px;">001</div><div id="t96" style="position:absolute;top:391px;line-height:0;white-space:nowrap;font-size:12px;font-weight:normal;color:#222;letter-spacing:0.000px;letter-spacing:-0.2px;right:623.5px;">25</div><div id="t97" style="position:absolute;top:390px;line-height:0;white-space:nowrap;font-size:12px;font-weight:normal;color:#222;letter-spacing:0.000px;letter-spacing:-0.2px;left:455px;">00001</div><div id="t98" style="position:absolute;top:390px;line-height:0;white-space:nowrap;font-size:12px;font-weight:normal;color:#222;letter-spacing:0.000px;letter-spacing:-0.2px;left:535.3px;">00025</div><div id="t99" style="position:absolute;top:391px;line-height:0;white-space:nowrap;font-size:12px;font-weight:normal;color:#222;letter-spacing:0.000px;letter-spacing:-0.2px;right:369px;">2015</div><div id="t100" style="position:absolute;top:391px;line-height:0;white-space:nowrap;font-size:12px;font-weight:normal;color:#222;letter-spacing:0.000px;letter-spacing:-0.2px;right:298px;">25.000</div><div id="t101" style="position:absolute;top:391px;line-height:0;white-space:nowrap;font-size:12px;font-weight:normal;color:#222;letter-spacing:-0.079px;left:908.6px;">Ngô Chí Linh</div><div id="t102" style="position:absolute;top:391px;line-height:0;white-space:nowrap;font-size:12px;font-weight:normal;color:#222;letter-spacing:0.000px;letter-spacing:-0.2px;left:1009.3px;">NXB</div><div style="position:absolute;left:17px;top:406px;width:1012px;height:30px;background:#f9f9f9"></div><div style="position:absolute;left:528px;top:406px;width:84px;height:30px;background:#efefef"></div><div style="position:absolute;left:17px;top:436px;width:1012px;height:1px;background:#d6d6d6"></div><div id="t103" style="position:absolute;top:422px;line-height:0;white-space:nowrap;font-size:12px;font-weight:normal;color:#222;letter-spacing:0.000px;letter-spacing:-0.2px;left:24.599999999999994px;">Văn 7</div><div id="t104" style="position:absolute;top:422px;line-height:0;white-space:nowrap;font-size:12px;font-weight:normal;color:#222;letter-spacing:0.000px;letter-spacing:-0.2px;left:274px;">001</div><div id="t105" style="position:absolute;top:422px;line-height:0;white-space:nowrap;font-size:12px;font-weight:normal;color:#222;letter-spacing:0.000px;letter-spacing:-0.2px;right:623.5px;">25</div><div id="t106" style="position:absolute;top:421px;line-height:0;white-space:nowrap;font-size:12px;font-weight:normal;color:#222;letter-spacing:0.000px;letter-spacing:-0.2px;left:455px;">00001</div><div id="t107" style="position:absolute;top:421px;line-height:0;white-space:nowrap;font-size:12px;font-weight:normal;color:#222;letter-spacing:0.000px;letter-spacing:-0.2px;left:535.3px;">00025</div><div id="t108" style="position:absolute;top:422px;line-height:0;white-space:nowrap;font-size:12px;font-weight:normal;color:#222;letter-spacing:0.000px;letter-spacing:-0.2px;right:369px;">2015</div><div id="t109" style="position:absolute;top:422px;line-height:0;white-space:nowrap;font-size:12px;font-weight:normal;color:#222;letter-spacing:0.000px;letter-spacing:-0.2px;right:298px;">25.000</div><div id="t110" style="position:absolute;top:422px;line-height:0;white-space:nowrap;font-size:12px;font-weight:normal;color:#222;letter-spacing:-0.079px;left:908.6px;">Ngô Chí Linh</div><div id="t111" style="position:absolute;top:422px;line-height:0;white-space:nowrap;font-size:12px;font-weight:normal;color:#222;letter-spacing:0.000px;letter-spacing:-0.2px;left:1009.3px;">NXB</div><div style="position:absolute;left:17px;top:437px;width:1012px;height:30px;background:#fff"></div><div style="position:absolute;left:528px;top:437px;width:84px;height:30px;background:#efefef"></div><div style="position:absolute;left:17px;top:467px;width:1012px;height:1px;background:#d6d6d6"></div><div id="t112" style="position:absolute;top:453px;line-height:0;white-space:nowrap;font-size:12px;font-weight:normal;color:#222;letter-spacing:0.000px;letter-spacing:-0.2px;left:24.599999999999994px;">Văn 8</div><div id="t113" style="position:absolute;top:453px;line-height:0;white-space:nowrap;font-size:12px;font-weight:normal;color:#222;letter-spacing:0.000px;letter-spacing:-0.2px;left:274px;">001</div><div id="t114" style="position:absolute;top:453px;line-height:0;white-space:nowrap;font-size:12px;font-weight:normal;color:#222;letter-spacing:0.000px;letter-spacing:-0.2px;right:623.5px;">25</div><div id="t115" style="position:absolute;top:452px;line-height:0;white-space:nowrap;font-size:12px;font-weight:normal;color:#222;letter-spacing:0.000px;letter-spacing:-0.2px;left:455px;">00001</div><div id="t116" style="position:absolute;top:452px;line-height:0;white-space:nowrap;font-size:12px;font-weight:normal;color:#222;letter-spacing:0.000px;letter-spacing:-0.2px;left:535.3px;">00025</div><div id="t117" style="position:absolute;top:453px;line-height:0;white-space:nowrap;font-size:12px;font-weight:normal;color:#222;letter-spacing:0.000px;letter-spacing:-0.2px;right:369px;">2015</div><div id="t118" style="position:absolute;top:453px;line-height:0;white-space:nowrap;font-size:12px;font-weight:normal;color:#222;letter-spacing:0.000px;letter-spacing:-0.2px;right:298px;">25.000</div><div id="t119" style="position:absolute;top:453px;line-height:0;white-space:nowrap;font-size:12px;font-weight:normal;color:#222;letter-spacing:-0.079px;left:908.6px;">Ngô Chí Linh</div><div id="t120" style="position:absolute;top:453px;line-height:0;white-space:nowrap;font-size:12px;font-weight:normal;color:#222;letter-spacing:0.000px;letter-spacing:-0.2px;left:1009.3px;">NXB</div><div style="position:absolute;left:17px;top:468px;width:1012px;height:30px;background:#f9f9f9"></div><div style="position:absolute;left:528px;top:468px;width:84px;height:30px;background:#efefef"></div><div style="position:absolute;left:17px;top:498px;width:1012px;height:1px;background:#d6d6d6"></div><div id="t121" style="position:absolute;top:484px;line-height:0;white-space:nowrap;font-size:12px;font-weight:normal;color:#222;letter-spacing:0.000px;letter-spacing:-0.2px;left:24.599999999999994px;">Văn 9</div><div id="t122" style="position:absolute;top:484px;line-height:0;white-space:nowrap;font-size:12px;font-weight:normal;color:#222;letter-spacing:0.000px;letter-spacing:-0.2px;left:274px;">001</div><div id="t123" style="position:absolute;top:484px;line-height:0;white-space:nowrap;font-size:12px;font-weight:normal;color:#222;letter-spacing:0.000px;letter-spacing:-0.2px;right:623.5px;">25</div><div id="t124" style="position:absolute;top:483px;line-height:0;white-space:nowrap;font-size:12px;font-weight:normal;color:#222;letter-spacing:0.000px;letter-spacing:-0.2px;left:455px;">00001</div><div id="t125" style="position:absolute;top:483px;line-height:0;white-space:nowrap;font-size:12px;font-weight:normal;color:#222;letter-spacing:0.000px;letter-spacing:-0.2px;left:535.3px;">00025</div><div id="t126" style="position:absolute;top:484px;line-height:0;white-space:nowrap;font-size:12px;font-weight:normal;color:#222;letter-spacing:0.000px;letter-spacing:-0.2px;right:369px;">2015</div><div id="t127" style="position:absolute;top:484px;line-height:0;white-space:nowrap;font-size:12px;font-weight:normal;color:#222;letter-spacing:0.000px;letter-spacing:-0.2px;right:298px;">25.000</div><div id="t128" style="position:absolute;top:484px;line-height:0;white-space:nowrap;font-size:12px;font-weight:normal;color:#222;letter-spacing:-0.079px;left:908.6px;">Ngô Chí Linh</div><div id="t129" style="position:absolute;top:484px;line-height:0;white-space:nowrap;font-size:12px;font-weight:normal;color:#222;letter-spacing:0.000px;letter-spacing:-0.2px;left:1009.3px;">NXB</div><div style="position:absolute;left:17px;top:499px;width:1012px;height:30px;background:#fff"></div><div style="position:absolute;left:528px;top:499px;width:84px;height:30px;background:#efefef"></div><div style="position:absolute;left:17px;top:529px;width:1012px;height:1px;background:#d6d6d6"></div><div id="t130" style="position:absolute;top:515px;line-height:0;white-space:nowrap;font-size:12px;font-weight:normal;color:#222;letter-spacing:0.000px;letter-spacing:-0.2px;left:24.599999999999994px;">Lý 6</div><div id="t131" style="position:absolute;top:515px;line-height:0;white-space:nowrap;font-size:12px;font-weight:normal;color:#222;letter-spacing:0.000px;letter-spacing:-0.2px;left:274px;">001</div><div id="t132" style="position:absolute;top:515px;line-height:0;white-space:nowrap;font-size:12px;font-weight:normal;color:#222;letter-spacing:0.000px;letter-spacing:-0.2px;right:623.5px;">25</div><div id="t133" style="position:absolute;top:514px;line-height:0;white-space:nowrap;font-size:12px;font-weight:normal;color:#222;letter-spacing:0.000px;letter-spacing:-0.2px;left:455px;">00001</div><div id="t134" style="position:absolute;top:514px;line-height:0;white-space:nowrap;font-size:12px;font-weight:normal;color:#222;letter-spacing:0.000px;letter-spacing:-0.2px;left:535.3px;">00025</div><div id="t135" style="position:absolute;top:515px;line-height:0;white-space:nowrap;font-size:12px;font-weight:normal;color:#222;letter-spacing:0.000px;letter-spacing:-0.2px;right:369px;">2015</div><div id="t136" style="position:absolute;top:515px;line-height:0;white-space:nowrap;font-size:12px;font-weight:normal;color:#222;letter-spacing:0.000px;letter-spacing:-0.2px;right:298px;">25.000</div><div id="t137" style="position:absolute;top:515px;line-height:0;white-space:nowrap;font-size:12px;font-weight:normal;color:#222;letter-spacing:-0.079px;left:908.6px;">Ngô Chí Linh</div><div id="t138" style="position:absolute;top:515px;line-height:0;white-space:nowrap;font-size:12px;font-weight:normal;color:#222;letter-spacing:0.000px;letter-spacing:-0.2px;left:1009.3px;">NXB</div><div style="position:absolute;left:17px;top:530px;width:1012px;height:30px;background:#f9f9f9"></div><div style="position:absolute;left:528px;top:530px;width:84px;height:30px;background:#efefef"></div><div style="position:absolute;left:17px;top:560px;width:1012px;height:1px;background:#d6d6d6"></div><div id="t139" style="position:absolute;top:546px;line-height:0;white-space:nowrap;font-size:12px;font-weight:normal;color:#222;letter-spacing:0.000px;letter-spacing:-0.2px;left:24.599999999999994px;">Lý 7</div><div id="t140" style="position:absolute;top:546px;line-height:0;white-space:nowrap;font-size:12px;font-weight:normal;color:#222;letter-spacing:0.000px;letter-spacing:-0.2px;left:274px;">001</div><div id="t141" style="position:absolute;top:546px;line-height:0;white-space:nowrap;font-size:12px;font-weight:normal;color:#222;letter-spacing:0.000px;letter-spacing:-0.2px;right:623.5px;">25</div><div id="t142" style="position:absolute;top:545px;line-height:0;white-space:nowrap;font-size:12px;font-weight:normal;color:#222;letter-spacing:0.000px;letter-spacing:-0.2px;left:455px;">00001</div><div id="t143" style="position:absolute;top:545px;line-height:0;white-space:nowrap;font-size:12px;font-weight:normal;color:#222;letter-spacing:0.000px;letter-spacing:-0.2px;left:535.3px;">00025</div><div id="t144" style="position:absolute;top:546px;line-height:0;white-space:nowrap;font-size:12px;font-weight:normal;color:#222;letter-spacing:0.000px;letter-spacing:-0.2px;right:369px;">2015</div><div id="t145" style="position:absolute;top:546px;line-height:0;white-space:nowrap;font-size:12px;font-weight:normal;color:#222;letter-spacing:0.000px;letter-spacing:-0.2px;right:298px;">25.000</div><div id="t146" style="position:absolute;top:546px;line-height:0;white-space:nowrap;font-size:12px;font-weight:normal;color:#222;letter-spacing:-0.079px;left:908.6px;">Ngô Chí Linh</div><div id="t147" style="position:absolute;top:546px;line-height:0;white-space:nowrap;font-size:12px;font-weight:normal;color:#222;letter-spacing:0.000px;letter-spacing:-0.2px;left:1009.3px;">NXB</div><div style="position:absolute;left:17px;top:561px;width:1012px;height:30px;background:#fff"></div><div style="position:absolute;left:528px;top:561px;width:84px;height:30px;background:#efefef"></div><div style="position:absolute;left:17px;top:591px;width:1012px;height:1px;background:#d6d6d6"></div><div id="t148" style="position:absolute;top:577px;line-height:0;white-space:nowrap;font-size:12px;font-weight:normal;color:#222;letter-spacing:0.000px;letter-spacing:-0.2px;left:24.599999999999994px;">Lý 8</div><div id="t149" style="position:absolute;top:577px;line-height:0;white-space:nowrap;font-size:12px;font-weight:normal;color:#222;letter-spacing:0.000px;letter-spacing:-0.2px;left:274px;">001</div><div id="t150" style="position:absolute;top:577px;line-height:0;white-space:nowrap;font-size:12px;font-weight:normal;color:#222;letter-spacing:0.000px;letter-spacing:-0.2px;right:623.5px;">25</div><div id="t151" style="position:absolute;top:576px;line-height:0;white-space:nowrap;font-size:12px;font-weight:normal;color:#222;letter-spacing:0.000px;letter-spacing:-0.2px;left:455px;">00001</div><div id="t152" style="position:absolute;top:576px;line-height:0;white-space:nowrap;font-size:12px;font-weight:normal;color:#222;letter-spacing:0.000px;letter-spacing:-0.2px;left:535.3px;">00025</div><div id="t153" style="position:absolute;top:577px;line-height:0;white-space:nowrap;font-size:12px;font-weight:normal;color:#222;letter-spacing:0.000px;letter-spacing:-0.2px;right:369px;">2015</div><div id="t154" style="position:absolute;top:577px;line-height:0;white-space:nowrap;font-size:12px;font-weight:normal;color:#222;letter-spacing:0.000px;letter-spacing:-0.2px;right:298px;">25.000</div><div id="t155" style="position:absolute;top:577px;line-height:0;white-space:nowrap;font-size:12px;font-weight:normal;color:#222;letter-spacing:-0.079px;left:908.6px;">Ngô Chí Linh</div><div id="t156" style="position:absolute;top:577px;line-height:0;white-space:nowrap;font-size:12px;font-weight:normal;color:#222;letter-spacing:0.000px;letter-spacing:-0.2px;left:1009.3px;">NXB</div><div style="position:absolute;left:17px;top:592px;width:1012px;height:30px;background:#f9f9f9"></div><div style="position:absolute;left:528px;top:592px;width:84px;height:30px;background:#efefef"></div><div style="position:absolute;left:17px;top:622px;width:1012px;height:1px;background:#d6d6d6"></div><div id="t157" style="position:absolute;top:608px;line-height:0;white-space:nowrap;font-size:12px;font-weight:normal;color:#222;letter-spacing:0.000px;letter-spacing:-0.2px;left:24.599999999999994px;">Lý 9</div><div id="t158" style="position:absolute;top:608px;line-height:0;white-space:nowrap;font-size:12px;font-weight:normal;color:#222;letter-spacing:0.000px;letter-spacing:-0.2px;left:274px;">001</div><div id="t159" style="position:absolute;top:608px;line-height:0;white-space:nowrap;font-size:12px;font-weight:normal;color:#222;letter-spacing:0.000px;letter-spacing:-0.2px;right:623.5px;">25</div><div id="t160" style="position:absolute;top:607px;line-height:0;white-space:nowrap;font-size:12px;font-weight:normal;color:#222;letter-spacing:0.000px;letter-spacing:-0.2px;left:455px;">00001</div><div id="t161" style="position:absolute;top:607px;line-height:0;white-space:nowrap;font-size:12px;font-weight:normal;color:#222;letter-spacing:0.000px;letter-spacing:-0.2px;left:535.3px;">00025</div><div id="t162" style="position:absolute;top:608px;line-height:0;white-space:nowrap;font-size:12px;font-weight:normal;color:#222;letter-spacing:0.000px;letter-spacing:-0.2px;right:369px;">2015</div><div id="t163" style="position:absolute;top:608px;line-height:0;white-space:nowrap;font-size:12px;font-weight:normal;color:#222;letter-spacing:0.000px;letter-spacing:-0.2px;right:298px;">25.000</div><div id="t164" style="position:absolute;top:608px;line-height:0;white-space:nowrap;font-size:12px;font-weight:normal;color:#222;letter-spacing:-0.079px;left:908.6px;">Ngô Chí Linh</div><div id="t165" style="position:absolute;top:608px;line-height:0;white-space:nowrap;font-size:12px;font-weight:normal;color:#222;letter-spacing:0.000px;letter-spacing:-0.2px;left:1009.3px;">NXB</div><div style="position:absolute;left:17px;top:623px;width:1012px;height:30px;background:#fff"></div><div style="position:absolute;left:528px;top:623px;width:84px;height:30px;background:#efefef"></div><div style="position:absolute;left:17px;top:653px;width:1012px;height:1px;background:#d6d6d6"></div><div id="t166" style="position:absolute;top:639px;line-height:0;white-space:nowrap;font-size:12px;font-weight:normal;color:#222;letter-spacing:0.000px;letter-spacing:-0.2px;left:24.599999999999994px;">Hóa 6</div><div id="t167" style="position:absolute;top:639px;line-height:0;white-space:nowrap;font-size:12px;font-weight:normal;color:#222;letter-spacing:0.000px;letter-spacing:-0.2px;left:274px;">001</div><div id="t168" style="position:absolute;top:639px;line-height:0;white-space:nowrap;font-size:12px;font-weight:normal;color:#222;letter-spacing:0.000px;letter-spacing:-0.2px;right:623.5px;">25</div><div id="t169" style="position:absolute;top:638px;line-height:0;white-space:nowrap;font-size:12px;font-weight:normal;color:#222;letter-spacing:0.000px;letter-spacing:-0.2px;left:455px;">00001</div><div id="t170" style="position:absolute;top:638px;line-height:0;white-space:nowrap;font-size:12px;font-weight:normal;color:#222;letter-spacing:0.000px;letter-spacing:-0.2px;left:535.3px;">00025</div><div id="t171" style="position:absolute;top:639px;line-height:0;white-space:nowrap;font-size:12px;font-weight:normal;color:#222;letter-spacing:0.000px;letter-spacing:-0.2px;right:369px;">2015</div><div id="t172" style="position:absolute;top:639px;line-height:0;white-space:nowrap;font-size:12px;font-weight:normal;color:#222;letter-spacing:0.000px;letter-spacing:-0.2px;right:298px;">25.000</div><div id="t173" style="position:absolute;top:639px;line-height:0;white-space:nowrap;font-size:12px;font-weight:normal;color:#222;letter-spacing:-0.079px;left:908.6px;">Ngô Chí Linh</div><div id="t174" style="position:absolute;top:639px;line-height:0;white-space:nowrap;font-size:12px;font-weight:normal;color:#222;letter-spacing:0.000px;letter-spacing:-0.2px;left:1009.3px;">NXB</div><div style="position:absolute;left:17px;top:654px;width:1012px;height:30px;background:#f9f9f9"></div><div style="position:absolute;left:528px;top:654px;width:84px;height:30px;background:#efefef"></div><div style="position:absolute;left:17px;top:684px;width:1012px;height:1px;background:#d6d6d6"></div><div id="t175" style="position:absolute;top:670px;line-height:0;white-space:nowrap;font-size:12px;font-weight:normal;color:#222;letter-spacing:0.000px;letter-spacing:-0.2px;left:24.599999999999994px;">Hóa 7</div><div id="t176" style="position:absolute;top:670px;line-height:0;white-space:nowrap;font-size:12px;font-weight:normal;color:#222;letter-spacing:0.000px;letter-spacing:-0.2px;left:274px;">001</div><div id="t177" style="position:absolute;top:670px;line-height:0;white-space:nowrap;font-size:12px;font-weight:normal;color:#222;letter-spacing:0.000px;letter-spacing:-0.2px;right:623.5px;">25</div><div id="t178" style="position:absolute;top:669px;line-height:0;white-space:nowrap;font-size:12px;font-weight:normal;color:#222;letter-spacing:0.000px;letter-spacing:-0.2px;left:455px;">00001</div><div id="t179" style="position:absolute;top:669px;line-height:0;white-space:nowrap;font-size:12px;font-weight:normal;color:#222;letter-spacing:0.000px;letter-spacing:-0.2px;left:535.3px;">00025</div><div id="t180" style="position:absolute;top:670px;line-height:0;white-space:nowrap;font-size:12px;font-weight:normal;color:#222;letter-spacing:0.000px;letter-spacing:-0.2px;right:369px;">2015</div><div id="t181" style="position:absolute;top:670px;line-height:0;white-space:nowrap;font-size:12px;font-weight:normal;color:#222;letter-spacing:0.000px;letter-spacing:-0.2px;right:298px;">25.000</div><div id="t182" style="position:absolute;top:670px;line-height:0;white-space:nowrap;font-size:12px;font-weight:normal;color:#222;letter-spacing:-0.079px;left:908.6px;">Ngô Chí Linh</div><div id="t183" style="position:absolute;top:670px;line-height:0;white-space:nowrap;font-size:12px;font-weight:normal;color:#222;letter-spacing:0.000px;letter-spacing:-0.2px;left:1009.3px;">NXB</div><div style="position:absolute;left:17px;top:685px;width:1012px;height:30px;background:#fff"></div><div style="position:absolute;left:528px;top:685px;width:84px;height:30px;background:#efefef"></div><div style="position:absolute;left:17px;top:715px;width:1012px;height:1px;background:#d6d6d6"></div><div id="t184" style="position:absolute;top:701px;line-height:0;white-space:nowrap;font-size:12px;font-weight:normal;color:#222;letter-spacing:0.000px;letter-spacing:-0.2px;left:24.599999999999994px;">Hóa 8</div><div id="t185" style="position:absolute;top:701px;line-height:0;white-space:nowrap;font-size:12px;font-weight:normal;color:#222;letter-spacing:0.000px;letter-spacing:-0.2px;left:274px;">001</div><div id="t186" style="position:absolute;top:701px;line-height:0;white-space:nowrap;font-size:12px;font-weight:normal;color:#222;letter-spacing:0.000px;letter-spacing:-0.2px;right:623.5px;">25</div><div id="t187" style="position:absolute;top:700px;line-height:0;white-space:nowrap;font-size:12px;font-weight:normal;color:#222;letter-spacing:0.000px;letter-spacing:-0.2px;left:455px;">00001</div><div id="t188" style="position:absolute;top:700px;line-height:0;white-space:nowrap;font-size:12px;font-weight:normal;color:#222;letter-spacing:0.000px;letter-spacing:-0.2px;left:535.3px;">00025</div><div id="t189" style="position:absolute;top:701px;line-height:0;white-space:nowrap;font-size:12px;font-weight:normal;color:#222;letter-spacing:0.000px;letter-spacing:-0.2px;right:369px;">2015</div><div id="t190" style="position:absolute;top:701px;line-height:0;white-space:nowrap;font-size:12px;font-weight:normal;color:#222;letter-spacing:0.000px;letter-spacing:-0.2px;right:298px;">25.000</div><div id="t191" style="position:absolute;top:701px;line-height:0;white-space:nowrap;font-size:12px;font-weight:normal;color:#222;letter-spacing:-0.079px;left:908.6px;">Ngô Chí Linh</div><div id="t192" style="position:absolute;top:701px;line-height:0;white-space:nowrap;font-size:12px;font-weight:normal;color:#222;letter-spacing:0.000px;letter-spacing:-0.2px;left:1009.3px;">NXB</div><div style="position:absolute;left:17px;top:716px;width:1012px;height:30px;background:#f9f9f9"></div><div style="position:absolute;left:528px;top:716px;width:84px;height:30px;background:#efefef"></div><div style="position:absolute;left:17px;top:746px;width:1012px;height:1px;background:#d6d6d6"></div><div id="t193" style="position:absolute;top:732px;line-height:0;white-space:nowrap;font-size:12px;font-weight:normal;color:#222;letter-spacing:0.000px;letter-spacing:-0.2px;left:24.599999999999994px;">Hóa 9</div><div id="t194" style="position:absolute;top:732px;line-height:0;white-space:nowrap;font-size:12px;font-weight:normal;color:#222;letter-spacing:0.000px;letter-spacing:-0.2px;left:274px;">001</div><div id="t195" style="position:absolute;top:732px;line-height:0;white-space:nowrap;font-size:12px;font-weight:normal;color:#222;letter-spacing:0.000px;letter-spacing:-0.2px;right:623.5px;">25</div><div id="t196" style="position:absolute;top:731px;line-height:0;white-space:nowrap;font-size:12px;font-weight:normal;color:#222;letter-spacing:0.000px;letter-spacing:-0.2px;left:455px;">00001</div><div id="t197" style="position:absolute;top:731px;line-height:0;white-space:nowrap;font-size:12px;font-weight:normal;color:#222;letter-spacing:0.000px;letter-spacing:-0.2px;left:535.3px;">00025</div><div id="t198" style="position:absolute;top:732px;line-height:0;white-space:nowrap;font-size:12px;font-weight:normal;color:#222;letter-spacing:0.000px;letter-spacing:-0.2px;right:369px;">2015</div><div id="t199" style="position:absolute;top:732px;line-height:0;white-space:nowrap;font-size:12px;font-weight:normal;color:#222;letter-spacing:0.000px;letter-spacing:-0.2px;right:298px;">25.000</div><div id="t200" style="position:absolute;top:732px;line-height:0;white-space:nowrap;font-size:12px;font-weight:normal;color:#222;letter-spacing:-0.079px;left:908.6px;">Ngô Chí Linh</div><div id="t201" style="position:absolute;top:732px;line-height:0;white-space:nowrap;font-size:12px;font-weight:normal;color:#222;letter-spacing:0.000px;letter-spacing:-0.2px;left:1009.3px;">NXB</div><div style="position:absolute;left:17px;top:747px;width:1012px;height:30px;background:#fff"></div><div style="position:absolute;left:528px;top:747px;width:84px;height:30px;background:#efefef"></div><div style="position:absolute;left:17px;top:777px;width:1012px;height:1px;background:#d6d6d6"></div><div id="t202" style="position:absolute;top:763px;line-height:0;white-space:nowrap;font-size:12px;font-weight:normal;color:#222;letter-spacing:0.000px;letter-spacing:-0.2px;left:24.599999999999994px;">Sử 6</div><div id="t203" style="position:absolute;top:763px;line-height:0;white-space:nowrap;font-size:12px;font-weight:normal;color:#222;letter-spacing:0.000px;letter-spacing:-0.2px;left:274px;">001</div><div id="t204" style="position:absolute;top:763px;line-height:0;white-space:nowrap;font-size:12px;font-weight:normal;color:#222;letter-spacing:0.000px;letter-spacing:-0.2px;right:623.5px;">25</div><div id="t205" style="position:absolute;top:762px;line-height:0;white-space:nowrap;font-size:12px;font-weight:normal;color:#222;letter-spacing:0.000px;letter-spacing:-0.2px;left:455px;">00001</div><div id="t206" style="position:absolute;top:762px;line-height:0;white-space:nowrap;font-size:12px;font-weight:normal;color:#222;letter-spacing:0.000px;letter-spacing:-0.2px;left:535.3px;">00025</div><div id="t207" style="position:absolute;top:763px;line-height:0;white-space:nowrap;font-size:12px;font-weight:normal;color:#222;letter-spacing:0.000px;letter-spacing:-0.2px;right:369px;">2015</div><div id="t208" style="position:absolute;top:763px;line-height:0;white-space:nowrap;font-size:12px;font-weight:normal;color:#222;letter-spacing:0.000px;letter-spacing:-0.2px;right:298px;">25.000</div><div id="t209" style="position:absolute;top:763px;line-height:0;white-space:nowrap;font-size:12px;font-weight:normal;color:#222;letter-spacing:-0.079px;left:908.6px;">Ngô Chí Linh</div><div id="t210" style="position:absolute;top:763px;line-height:0;white-space:nowrap;font-size:12px;font-weight:normal;color:#222;letter-spacing:0.000px;letter-spacing:-0.2px;left:1009.3px;">NXB</div><div style="position:absolute;left:266px;top:251px;width:1px;height:510px;background:#d6d6d6"></div><div style="position:absolute;left:376px;top:251px;width:1px;height:510px;background:#d6d6d6"></div><div style="position:absolute;left:447px;top:251px;width:1px;height:510px;background:#d6d6d6"></div><div style="position:absolute;left:527px;top:251px;width:1px;height:510px;background:#d6d6d6"></div><div style="position:absolute;left:612px;top:251px;width:1px;height:510px;background:#d6d6d6"></div><div style="position:absolute;left:702px;top:251px;width:1px;height:510px;background:#d6d6d6"></div><div style="position:absolute;left:772px;top:251px;width:1px;height:510px;background:#d6d6d6"></div><div style="position:absolute;left:901px;top:251px;width:1px;height:510px;background:#d6d6d6"></div><div style="position:absolute;left:1001px;top:251px;width:1px;height:510px;background:#d6d6d6"></div><div style="position:absolute;left:1029px;top:251px;width:17px;height:510px;background:#f0f0f0"></div><div style="position:absolute;left:1031px;top:268px;width:13px;height:157px;background:#c1c1c1"></div><svg style="position:absolute;left:1034px;top:257px;overflow:visible" width="8" height="5" viewBox="0 0 8 5"><path d="M0 4.5 L7 4.5 L3.5 0.5 Z" fill="#a3a3a3"/></svg><svg style="position:absolute;left:1034px;top:750px;overflow:visible" width="8" height="5" viewBox="0 0 8 5"><path d="M0 0.5 L7 0.5 L3.5 4.5 Z" fill="#606060"/></svg><div style="position:absolute;left:17px;top:761px;width:1012px;height:18px;background:#f0f0f0"></div><div style="position:absolute;left:1029px;top:761px;width:17px;height:18px;background:#fff"></div><div style="position:absolute;left:159px;top:763px;width:770px;height:14px;background:#c1c1c1"></div><svg style="position:absolute;left:22px;top:765px;overflow:visible" width="6" height="9" viewBox="0 0 6 9"><path d="M5 0 L5 8 L0.5 4 Z" fill="#555"/></svg><svg style="position:absolute;left:1018px;top:765px;overflow:visible" width="6" height="9" viewBox="0 0 6 9"><path d="M0.5 0 L0.5 8 L5 4 Z" fill="#555"/></svg><div style="position:absolute;left:17px;top:779px;width:1029px;height:1px;background:#d3d3d3"></div><div style="position:absolute;left:17px;top:780px;width:1029px;height:29px;background:#f0f0f0"></div><svg style="position:absolute;left:22px;top:788.5px;overflow:visible" width="12" height="11" viewBox="0 0 12 11"><rect x="0.5" y="0.5" width="2" height="10" fill="#bdbdbd"/><path d="M11 0.5 L11 10.5 L3.5 5.5 Z" fill="#cfcfcf" stroke="#b5b5b5" stroke-width="0.6"/></svg><svg style="position:absolute;left:47px;top:788.5px;overflow:visible" width="8" height="11" viewBox="0 0 8 11"><path d="M7 0.5 L7 10.5 L0.5 5.5 Z" fill="#cfcfcf" stroke="#b5b5b5" stroke-width="0.6"/></svg><div style="position:absolute;left:65px;top:787px;width:1px;height:15px;background:#8ab4e4"></div><div id="t211" style="position:absolute;top:795px;line-height:0;white-space:nowrap;font-size:12px;font-weight:normal;color:#444;letter-spacing:-0.332px;left:73px;">Trang</div><div style="position:absolute;left:111px;top:783px;width:30px;height:23px;box-sizing:border-box;border:1px solid #cfcfcf;background:#fff;border-radius:2px"></div><div id="t212" style="position:absolute;top:795px;line-height:0;white-space:nowrap;font-size:12px;font-weight:normal;color:#222;letter-spacing:0.000px;left:117px;">1</div><div id="t213" style="position:absolute;top:795px;line-height:0;white-space:nowrap;font-size:12px;font-weight:normal;color:#444;letter-spacing:-0.142px;left:147.3px;">trên 3</div><div style="position:absolute;left:185px;top:787px;width:1px;height:15px;background:#8ab4e4"></div><svg style="position:absolute;left:196.5px;top:788.5px;overflow:visible" width="7" height="11" viewBox="0 0 7 11"><path d="M0.5 0.5 L0.5 10.5 L6.5 5.5 Z" fill="#2d7ad6"/></svg><svg style="position:absolute;left:218px;top:788.5px;overflow:visible" width="12" height="11" viewBox="0 0 12 11"><path d="M0.5 0.5 L0.5 10.5 L7.5 5.5 Z" fill="#2d7ad6"/><rect x="8.8" y="0.5" width="2.4" height="10" fill="#2d7ad6"/></svg><div style="position:absolute;left:237px;top:787px;width:1px;height:15px;background:#8ab4e4"></div><div id="t214" style="position:absolute;top:795px;line-height:0;white-space:nowrap;font-size:12px;font-weight:normal;color:#333;letter-spacing:-0.046px;left:241px;">Số bản ghi</div><div style="position:absolute;left:306px;top:783px;width:55px;height:22px;box-sizing:border-box;border:1px solid #c9c9c9;background:#fff;border-radius:2px"></div><div style="position:absolute;left:343px;top:784px;width:17px;height:20px;background:linear-gradient(#e9e9e9,#d6d6d6);border-left:1px solid #c9c9c9"></div><svg style="position:absolute;left:347px;top:790px;overflow:visible" width="9" height="6" viewBox="0 0 9 6"><path d="M1 1 L4.5 4.5 L8 1" fill="none" stroke="#1f3f7a" stroke-width="1.8"/></svg><div id="t215" style="position:absolute;top:795px;line-height:0;white-space:nowrap;font-size:12px;font-weight:normal;color:#222;letter-spacing:0.000px;left:311px;">50</div><div id="t216" style="position:absolute;top:795px;line-height:0;white-space:nowrap;font-size:12px;font-weight:normal;color:#555;letter-spacing:0.038px;right:23.40000000000009px;">Hiển thị 1 - 50 trên 110 kết quả</div><div style="position:absolute;left:774px;top:251px;width:128px;height:3px;background:#bcd3ef"></div><div style="position:absolute;left:774px;top:253px;width:128px;height:25px;box-sizing:border-box;border:1px solid #8fb3e2;background:#fff"></div><div style="position:absolute;left:884px;top:254px;width:17px;height:23px;background:linear-gradient(#e4eefa,#c8daf2);border-left:1px solid #9fbde5"></div><svg style="position:absolute;left:888px;top:260px;overflow:visible" width="10" height="7" viewBox="0 0 10 7"><path d="M1 1 L5 5 L9 1" fill="none" stroke="#1f3f7a" stroke-width="2"/></svg><div style="position:absolute;left:774px;top:277px;width:128px;height:111px;box-sizing:border-box;border-right:1px solid #8fb3e2;background:#fff"></div><div style="position:absolute;left:775px;top:277px;width:126px;height:23px;background:#dae5f5"></div><div id="t217" style="position:absolute;top:289px;line-height:0;white-space:nowrap;font-size:12px;font-weight:normal;color:#333;letter-spacing:-0.386px;left:779.7px;">Trường tự mua</div><div id="t218" style="position:absolute;top:311px;line-height:0;white-space:nowrap;font-size:12px;font-weight:normal;color:#333;letter-spacing:-0.331px;left:779.7px;">PGD cấp phát</div><div id="t219" style="position:absolute;top:333px;line-height:0;white-space:nowrap;font-size:12px;font-weight:normal;color:#333;letter-spacing:-0.331px;left:779.7px;">SGD cấp phát</div><div id="t220" style="position:absolute;top:355px;line-height:0;white-space:nowrap;font-size:12px;font-weight:normal;color:#333;letter-spacing:-0.104px;left:779.7px;">Biểu, tặng, quyên góp</div><div id="t221" style="position:absolute;top:377px;line-height:0;white-space:nowrap;font-size:12px;font-weight:normal;color:#333;letter-spacing:-0.884px;left:779.7px;">Khác</div><div style="position:absolute;left:771px;top:247px;width:134px;height:144px;box-sizing:border-box;border:3.3px solid #e5443f"></div><svg style="position:absolute;left:884px;top:267px;overflow:visible" width="26" height="34" viewBox="0 0 26 34"><defs><linearGradient id="hand" x1="0" y1="0" x2="1" y2="1"><stop offset="0.55" stop-color="#fff"/><stop offset="1" stop-color="#d8d8d8"/></linearGradient></defs><path d="M7 3.6 C7 0.6 11.5 0.6 11.5 3.6 L11.5 11.5 C12 8.8 14.8 8.8 15 11.3 C15.4 9.8 18 9.8 18.2 12.3 C18.8 11.2 22 11.4 22.2 14.5 L22.4 22 C22.4 26.5 20.6 29.5 19.8 31.6 L10.6 31.6 C9 28.8 6 25 3 21.3 C1 18.8 3 15.8 5.5 17.8 L7 19.3 Z" fill="url(#hand)" stroke="#1e2433" stroke-width="1.3" stroke-linejoin="round"/><path d="M11.5 11.5 L11.5 18 M15 11.3 L15 17.5 M18.2 12.3 L18.2 18" stroke="#1e2433" stroke-width="1"/></svg></div><svg style="position:absolute;left:0;top:0" width="1108" height="990"><path d="M111.3 134 L105.8 277" stroke="#e54545" stroke-width="4" fill="none"/><path d="M98 276 L112.6 276 L105 290 Z" fill="#e54545"/></svg></body></html>
